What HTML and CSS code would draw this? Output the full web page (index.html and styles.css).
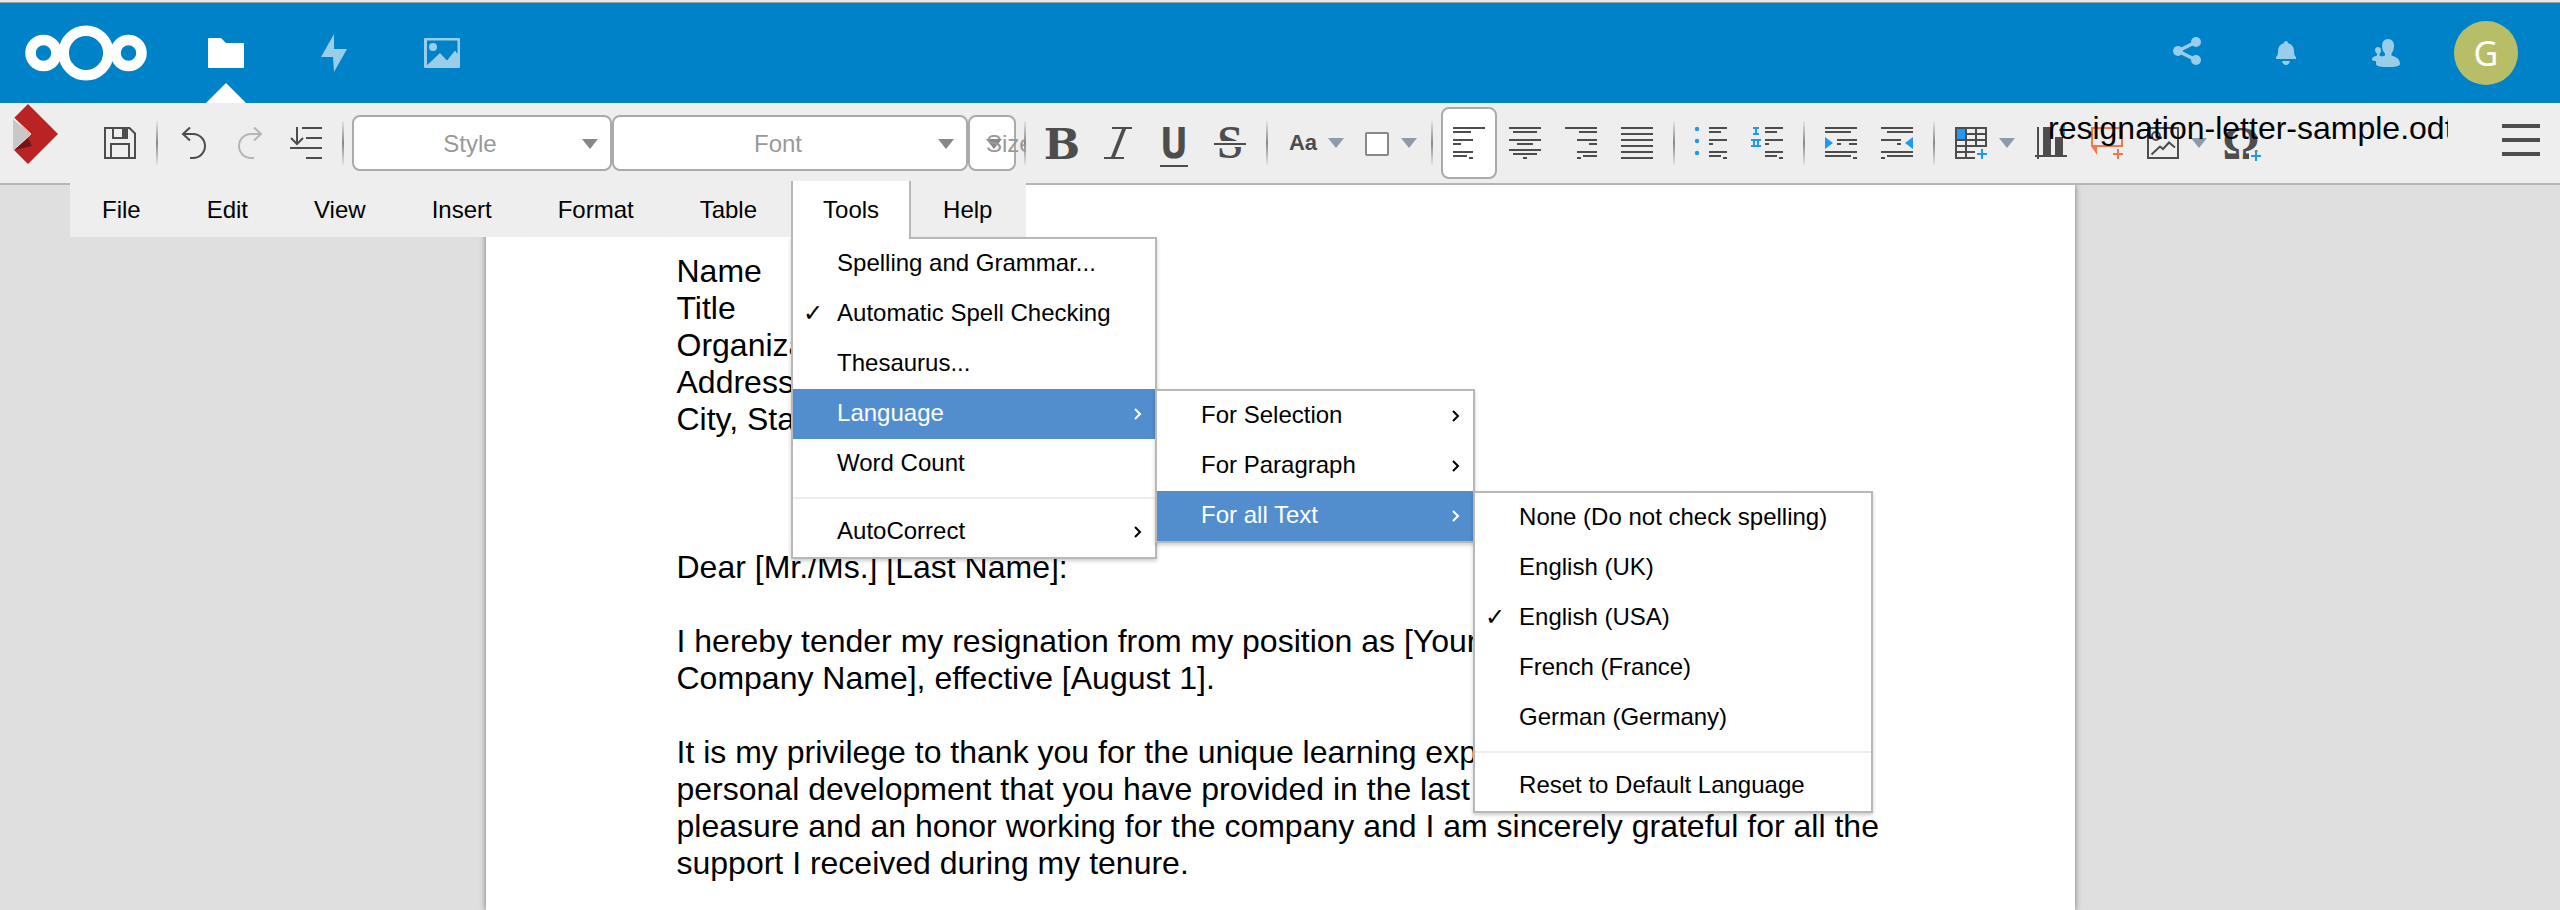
FILE: index.html
```html
<!DOCTYPE html>
<html lang="en">
<head>
<meta charset="utf-8">
<title>resignation-letter-sample.odt</title>
<link rel="stylesheet" href="styles.css">
</head>
<body>
<header class="header">
  <a class="logo" href="#" aria-label="Home">
    <svg width="124" height="60" viewBox="0 0 124 60" fill="none" stroke="#fff" stroke-width="10.5"><circle cx="19.500" cy="30" r="13"/><circle cx="62" cy="30" r="22.300"/><circle cx="104.500" cy="30" r="13"/></svg>
  </a>
  <nav class="apps">
    <a class="app app-active" href="#" aria-label="Files"><svg width="36" height="30" viewBox="0 0 36 30"><path d="M1 0H13L18 5H35Q36 5 36 6V29Q36 30 35 30H1Q0 30 0 29V1Q0 0 1 0Z" fill="#fff"/></svg></a>
    <a class="app" href="#" aria-label="Activity"><svg width="26" height="38" viewBox="0 0 26 38"><path d="M13 0L0 23H12L13 38L26 15H13Z" fill="#99cde9"/></svg></a>
    <a class="app" href="#" aria-label="Gallery"><svg width="36" height="30" viewBox="0 0 36 30"><path d="M1 0H35Q36 0 36 1V29Q36 30 35 30H1Q0 30 0 29V1Q0 0 1 0ZM3 2.500V27L5.500 25L16 15L23 22.500L31 12.500L33.500 16V2.500Z" fill="#99cde9" fill-rule="evenodd"/><circle cx="9" cy="9" r="4" fill="#99cde9"/></svg></a>
  </nav>
  <div class="header-right">
    <button class="head-btn" aria-label="Share"><svg width="28" height="32" viewBox="-1 0 28 32"><g fill="#99cde9"><circle cx="5" cy="14" r="5"/><circle cx="23" cy="5" r="5"/><circle cx="23" cy="23" r="5"/></g><path d="M23 5L5 14L23 23" fill="none" stroke="#99cde9" stroke-width="3.600"/></svg></button>
    <button class="head-btn" aria-label="Notifications"><svg width="20" height="24" viewBox="0 0 20 24"><path d="M10 0Q12 0 12 2Q18 4 18 10Q18 15 20 16V18H0V16Q2 15 2 10Q2 4 8 2Q8 0 10 0ZM6 20H14Q13 24 10 24Q7 24 6 20Z" fill="#99cde9"/></svg></button>
    <button class="head-btn" aria-label="Contacts"><svg width="28" height="28" viewBox="0 0 28 28"><g fill="#99cde9"><path d="M16 0C20 0 22 3 22 7C22 10 21 13 19.500 14.500V16.500C23 18 28 19 28 25C28 27.500 22 28 16 28C10 28 4 27.500 4 25V22C2 22 0 21.500 0 20.500C0 18 2.500 17.500 5 16.500V14.500C3.500 13.500 3 12 3 11C3 9 4.500 8 6 8C7.500 8 9 9 9 11C9 13 8.500 14 7.500 15V16.500L10 17.500L13 16.500V14.500C11 13 10 10 10 7C10 3 12 0 16 0Z"/></g></svg></button>
    <button class="head-btn" aria-label="Account"><span class="avatar">G</span></button>
  </div>
</header>

<div class="toolbar">
  <a class="brand" href="#" aria-label="Collabora"><svg width="46" height="62" viewBox="0 0 46 62"><path d="M1 15L15 1L45 31L15 61L1 47L17 31Z" fill="#b92324"/><path d="M0 16L17 31L0 48Z" fill="#c8c8c8"/><path d="M1 15L18 31L1 47" fill="none" stroke="#f6f6f6"/><path d="M1 47L15 35L19 43Z" fill="#701416"/></svg></a>
  <button class="tool" aria-label="Save"><svg class="icon" viewBox="0 0 32 32"><path d="M1 1H25.500L31 6.500V31H1ZM9 1V11H23V1M7 31V17H25V31" class="line"/><path d="M18 1H24V12H18Z"/></svg></button>
  <span class="sep"></span>
  <button class="tool" aria-label="Undo"><svg class="icon" viewBox="0 0 32 32"><path d="M12 .500L5 7L12 13.500M5 7H15A12 12 0 0 1 15 31H12" class="line"/></svg></button>
  <button class="tool disabled" aria-label="Redo"><svg class="icon" viewBox="0 0 32 32"><path d="M20 .500L27 7L20 13.500M27 7H17A12 12 0 0 0 17 31H20" class="line"/></svg></button>
  <button class="tool" aria-label="Paragraph spacing"><svg class="icon" viewBox="0 0 32 32"><path d="M7 0V17M1 11L7 17L13 11M12 1H32M16 11H32M0 21H32M16 31H32" class="line"/></svg></button>
  <span class="sep"></span>
  <span class="combo combo-style"><svg class="caret" viewBox="0 0 16 10"><path d="M0 0H16L8 10Z"/></svg><select aria-label="Style"><option>Style</option></select></span>
  <span class="combo combo-font"><svg class="caret" viewBox="0 0 16 10"><path d="M0 0H16L8 10Z"/></svg><select aria-label="Font"><option>Font</option></select></span>
  <span class="combo combo-size"><svg class="caret" viewBox="0 0 16 10"><path d="M0 0H16L8 10Z"/></svg><select aria-label="Size"><option>Size</option></select></span>
  <span class="sep"></span>
  <button class="tool" aria-label="Bold"><svg class="icon" viewBox="0 0 32 32"><text x="16" y="32" class="glyph-b">B</text></svg></button>
  <button class="tool" aria-label="Italic"><svg class="icon" viewBox="0 0 32 32"><path d="M10 1H30M2 31H22" class="line"/><path d="M20 2H24L13 30H9Z"/></svg></button>
  <button class="tool" aria-label="Underline"><svg class="icon" viewBox="0 0 32 32"><text x="16" y="31" class="glyph-u">U</text><path d="M2 38H30V40H2Z"/></svg></button>
  <button class="tool" aria-label="Strikethrough"><svg class="icon" viewBox="0 0 32 32"><text x="16" y="31" class="glyph-s">S</text><path d="M0 14H32V20H0Z" class="gap"/><path d="M0 16H32V18H0Z"/></svg></button>
  <span class="sep"></span>
  <span class="colors">
    <button class="tool tool-drop" aria-label="Font color"><svg class="icon" viewBox="0 0 32 32"><text x="15" y="23" class="glyph-a">Aa</text></svg><svg class="drop" viewBox="0 0 16 10"><path d="M0 0H16L8 10Z"/></svg></button>
    <button class="tool tool-drop" aria-label="Highlighting"><svg class="icon" viewBox="0 0 32 32"><rect x="4" y="6" width="22" height="22" rx="1" fill="#fff" stroke="#888" stroke-width="2"/></svg><svg class="drop" viewBox="1 0 16 10"><path d="M0 0H16L8 10Z"/></svg></button>
  </span>
  <span class="sep"></span>
  <button class="tool tool-on" aria-label="Align left"><svg class="icon" viewBox="0 0 32 32"><path d="M0 1H32M0 5H18M0 13H20M0 17H8M0 25H20M0 29H14M16 31H20" class="line"/></svg></button>
  <button class="tool" aria-label="Center"><svg class="icon" viewBox="0 0 32 32"><path d="M0 1H32M4 5H28M0 13H32M8 17H24M0 23H32M4 27H28M14 31H18" class="line"/></svg></button>
  <button class="tool" aria-label="Align right"><svg class="icon" viewBox="0 0 32 32"><path d="M0 1H32M14 5H32M12 13H32M24 17H32M12 25H32M18 29H32M12 31H16" class="line"/></svg></button>
  <button class="tool" aria-label="Justify"><svg class="icon" viewBox="0 0 32 32"><path d="M0 1H32M0 7H32M0 13H32M0 19H32M0 25H32M0 31H32" class="line"/></svg></button>
  <span class="sep"></span>
  <button class="tool" aria-label="Bullets"><svg class="icon" viewBox="0 0 32 32"><path d="M14 1H32M14 5H26M14 13H32M14 17H18M14 25H32M14 29H26M28 31H32" class="line"/><g class="blue"><circle cx="2" cy="2" r="2.200"/><circle cx="2" cy="14" r="2.200"/><circle cx="2" cy="26" r="2.200"/></g></svg></button>
  <button class="tool" aria-label="Numbering"><svg class="icon" viewBox="0 0 32 32"><path d="M14 1H32M14 5H26M14 13H32M14 17H18M14 25H32M14 29H26M28 31H32" class="line"/><path d="M2 1H8M2 7H8M5 1V7M0 13H10M0 19H10M3 13V19M7 13V19" class="line-blue"/></svg></button>
  <span class="sep"></span>
  <button class="tool" aria-label="Increase indent"><svg class="icon" viewBox="0 0 32 32"><path d="M0 1H32M0 5H26M12 13H32M12 17H16M24 17H32M0 25H32M0 29H26M28 31H32" class="line"/><path d="M0 10L8 16L0 22Z" class="blue"/></svg></button>
  <button class="tool" aria-label="Decrease indent"><svg class="icon" viewBox="0 0 32 32"><path d="M0 1H32M6 5H32M0 13H20M16 17H20M0 25H32M6 29H32M0 31H4" class="line"/><path d="M32 10L24 16L32 22Z" class="blue"/></svg></button>
  <span class="sep"></span>
  <button class="tool tool-insert" aria-label="Insert table"><svg class="icon" viewBox="0 0 32 32"><path d="M2 2H10V12H2Z" class="blue"/><path d="M0 1H32M1 0V32M11 0V32M21 0V20M31 0V20M10 7H32M0 13H32M0 19H32M0 25H20M0 31H20" class="line"/><path d="M22 27H32M27 22V32" class="line-blue"/></svg><svg class="drop" viewBox="0 0 16 10"><path d="M0 0H16L8 10Z"/></svg></button>
  <button class="tool" aria-label="Insert chart"><svg class="icon" viewBox="0 0 32 32"><path d="M3 0V32M0 29H32" class="line"/><path d="M8 0H16V28H8ZM20 10H28V28H20Z"/><path d="M24 3H34M29 -2V8" class="line-blue"/></svg></button>
  <button class="tool" aria-label="Insert comment"><svg class="icon" viewBox="0 0 32 32"><path d="M1 1H31V19H1ZM22 27H32M27 22V32" class="line-orange"/><path d="M0 18H6V28L0 19Z" fill="#f5774f"/></svg></button>
  <button class="tool tool-insert" aria-label="Insert image"><svg class="icon" viewBox="0 0 32 32"><path d="M1 1H31V31H1ZM4.500 27.500L13 19.500L16 22L22 15.500L28 20.500" class="line"/><circle cx="9" cy="9" r="4" class="line"/></svg><svg class="drop" viewBox="0 0 16 10"><path d="M0 0H16L8 10Z"/></svg></button>
  <button class="tool" aria-label="Insert symbol"><svg class="icon" viewBox="0 0 32 32"><text x="14" y="32" class="glyph-o">Ω</text><path d="M22 25H32V32H22Z" class="gap"/><path d="M24 29H34M29 24V34" class="line-blue"/></svg></button>
  <input class="doc-name" type="text" aria-label="Document name" value="resignation-letter-sample.odt">
  <button class="burger" aria-label="Menu"><svg width="38" height="32" viewBox="0 0 38 32"><path d="M0 2H38M0 16H38M0 30H38" stroke="#4d4d4d" stroke-width="4"/></svg></button>
</div>

<main class="workspace">
  <nav class="menubar">
    <div class="entry"><button class="tab">File</button></div>
    <div class="entry"><button class="tab">Edit</button></div>
    <div class="entry"><button class="tab">View</button></div>
    <div class="entry"><button class="tab">Insert</button></div>
    <div class="entry"><button class="tab">Format</button></div>
    <div class="entry"><button class="tab">Table</button></div>
    <div class="entry">
      <button class="tab tab-open">Tools</button>
      <div class="menu menu-tools">
        <button class="item">Spelling and Grammar...</button>
        <button class="item"><span class="check">✓</span>Automatic Spell Checking</button>
        <button class="item">Thesaurus...</button>
        <div class="holder">
          <button class="item item-on">Language<svg class="more" viewBox="0 0 8 12"><path d="M1 1L6 6L1 11"/></svg></button>
          <div class="menu submenu menu-scope">
            <button class="item">For Selection<svg class="more" viewBox="0 0 8 12"><path d="M1 1L6 6L1 11"/></svg></button>
            <button class="item">For Paragraph<svg class="more" viewBox="0 0 8 12"><path d="M1 1L6 6L1 11"/></svg></button>
            <div class="holder">
              <button class="item item-on">For all Text<svg class="more" viewBox="0 0 8 12"><path d="M1 1L6 6L1 11"/></svg></button>
              <div class="menu submenu menu-lang">
                <button class="item">None (Do not check spelling)</button>
                <button class="item">English (UK)</button>
                <button class="item"><span class="check">✓</span>English (USA)</button>
                <button class="item">French (France)</button>
                <button class="item">German (Germany)</button>
                <hr class="rule">
                <button class="item">Reset to Default Language</button>
              </div>
            </div>
          </div>
        </div>
        <button class="item">Word Count</button>
        <hr class="rule">
        <button class="item">AutoCorrect<svg class="more" viewBox="0 0 8 12"><path d="M1 1L6 6L1 11"/></svg></button>
      </div>
    </div>
    <div class="entry"><button class="tab">Help</button></div>
  </nav>
  <article class="page">
    <p>Name<br>Title<br>Organization<br>Address<br>City, State</p>
    <p class="salutation">Dear [Mr./Ms.] [Last Name]:</p>
    <p>I hereby tender my resignation from my position as [Your Position] at<br>Company Name], effective [August 1].</p>
    <p>It is my privilege to thank you for the unique learning experience and<br>personal development that you have provided in the last year. It was a<br>pleasure and an honor working for the company and I am sincerely grateful for all the<br>support I received during my tenure.</p>
  </article>
</main>
</body>
</html>
```

FILE: styles.css
```css
* { box-sizing: border-box; }
html, body { height: 100%; }
body {
  margin: 0;
  display: flex;
  flex-direction: column;
  overflow: hidden;
  background: #dfdfdf;
  font-family: "Liberation Sans", Arial, sans-serif;
  font-size: 24px;
  color: #000;
}
button, select, input {
  font: inherit;
  color: inherit;
  background: none;
  border: 0;
  margin: 0;
  padding: 0;
  border-radius: 0;
}
svg { display: block; overflow: visible; flex: none; }

/* Header */
.header {
  flex: none;
  display: flex;
  align-items: stretch;
  height: 103px;
  padding: 0 24px;
  background: #0082c9;
  border-top: 2px solid #e6e6e6;
  box-shadow: inset 0 1px #a0a5a5;
}
.logo { display: flex; align-items: center; width: 148px; padding-top: 1px; }
.apps { display: flex; }
.app { position: relative; display: flex; align-items: center; justify-content: center; width: 108px; padding-top: 1px; }
.app-active::after {
  content: "";
  position: absolute;
  left: 34px;
  bottom: 0;
  border: 20px solid transparent;
  border-top: 0;
  border-bottom-color: #fff;
}
.header-right { display: flex; margin-left: auto; }
.head-btn { display: flex; align-items: center; justify-content: center; width: 100px; padding-top: 1px; }
.avatar {
  width: 64px;
  height: 64px;
  border-radius: 50%;
  background: #b8be68;
  color: #fff;
  font: 34px/64px "Noto Sans", "Open Sans", sans-serif;
  text-align: center;
}

/* Toolbar */
.toolbar {
  position: relative;
  flex: none;
  display: flex;
  align-items: center;
  height: 82px;
  padding: 0 20px 0 13px;
  background: #eee;
  border-bottom: 2px solid #b6b6b6;
}
.brand { align-self: flex-start; flex: none; width: 79px; }
.tool {
  flex: none;
  display: flex;
  align-items: center;
  width: 56px;
  height: 72px;
  padding: 0 10px;
  border: 2px solid transparent;
  border-radius: 8px;
  color: #4d4d4d;
  fill: #4d4d4d;
}
.tool-on { background: #fff; border-color: #aaa; }
.disabled { opacity: .35; }
.colors { flex: none; display: flex; width: 147px; }
.tool-drop { flex: 1; gap: 8px; }
.tool-insert { width: 80px; gap: 12px; }
.icon { width: 32px; height: 32px; }
.line, .line-blue, .line-orange { fill: none; stroke: #4d4d4d; stroke-width: 2px; }
.line-blue { stroke: #1e99f5; }
.line-orange { stroke: #f5774f; }
.blue { fill: #1e99f5; }
.gap { fill: #eee; }
.drop { width: 16px; height: 10px; fill: #8c9aa9; }
.icon text { text-anchor: middle; fill: #4d4d4d; }
.glyph-b { font: bold 43px "DejaVu Serif", serif; }
.glyph-u { font: bold 43px "DejaVu Sans Mono", monospace; }
.glyph-s { font: bold 46px "Liberation Serif", serif; }
.glyph-a { font: bold 22px "Liberation Sans", sans-serif; }
.glyph-o { font: bold 46px "Liberation Serif", serif; }
.sep {
  flex: none;
  width: 2px;
  height: 44px;
  margin: 0 8px;
  background: linear-gradient(#e4e4e4, #888 50%, #e4e4e4);
}
.combo {
  position: relative;
  flex: none;
  height: 56px;
  background: #fff;
  border: 2px solid #aaa;
  border-radius: 8px;
}
.combo select {
  position: relative;
  appearance: none;
  width: 100%;
  height: 52px;
  padding-right: 24px;
  text-align: center;
  text-align-last: center;
  color: #999;
}
.combo-style { width: 260px; }
.combo-font { width: 356px; }
.combo-size { width: 48px; }
.combo-size select { width: 56px; padding: 0 0 0 16px; text-align: left; text-align-last: left; }
.caret { position: absolute; right: 12px; top: 22px; width: 16px; height: 10px; fill: #888; }
.doc-name {
  position: absolute;
  right: 112px;
  top: 5px;
  width: 400px;
  height: 40px;
  font-size: 32px;
}
.burger { flex: none; margin-left: auto; padding-bottom: 6px; }

/* Menus */
.menubar {
  position: absolute;
  z-index: 2;
  left: 70px;
  top: -4px;
  display: flex;
  height: 56px;
  background: #eee;
}
.entry { position: relative; }
.tab {
  position: relative;
  height: 56px;
  padding: 2px 34px 0 30px;
  border-left: 2px solid #ededed;
}
.tab-open {
  z-index: 1;
  height: 58px;
  padding: 0 30px;
  background: #fff;
  border-left-color: #b8b8b8;
  border-right: 2px solid #b8b8b8;
}
.menu {
  position: absolute;
  background: #fff;
  border: 2px solid #b8b8b8;
  box-shadow: 0 2px 4px rgba(0, 0, 0, .2);
}
.menu-tools { left: 0; top: 56px; width: 366px; }
.submenu { left: 100%; top: 0; }
.menu-scope { width: 320px; }
.menu-lang { width: 400px; }
.holder { position: relative; }
.item {
  position: relative;
  display: flex;
  align-items: center;
  width: 100%;
  height: 50px;
  padding: 0 13px 3px 44px;
  text-align: left;
  white-space: nowrap;
}
.item-on { background: #528ecd; color: #fff; }
.check { position: absolute; left: 10px; font-family: "DejaVu Sans", sans-serif; font-size: 24px; }
.more { width: 8px; height: 12px; margin: 3px 0 0 auto; fill: none; stroke: currentColor; stroke-width: 2px; }
.rule { height: 2px; margin: 8px 0; border: 0; background: #eee; }

/* Document */
.workspace { position: relative; flex: 1; min-height: 0; display: flex; justify-content: center; }
.page {
  width: 100%;
  max-width: 1589px;
  padding: 68px 191px 0;
  background: #fff;
  box-shadow: 0 0 6px rgba(0, 0, 0, .5);
  clip-path: inset(0 -8px);
  font-size: 32px;
  line-height: 37px;
  white-space: nowrap;
}
.page p { margin: 0 0 37px; }
.page .salutation { margin-top: 111px; }
```
